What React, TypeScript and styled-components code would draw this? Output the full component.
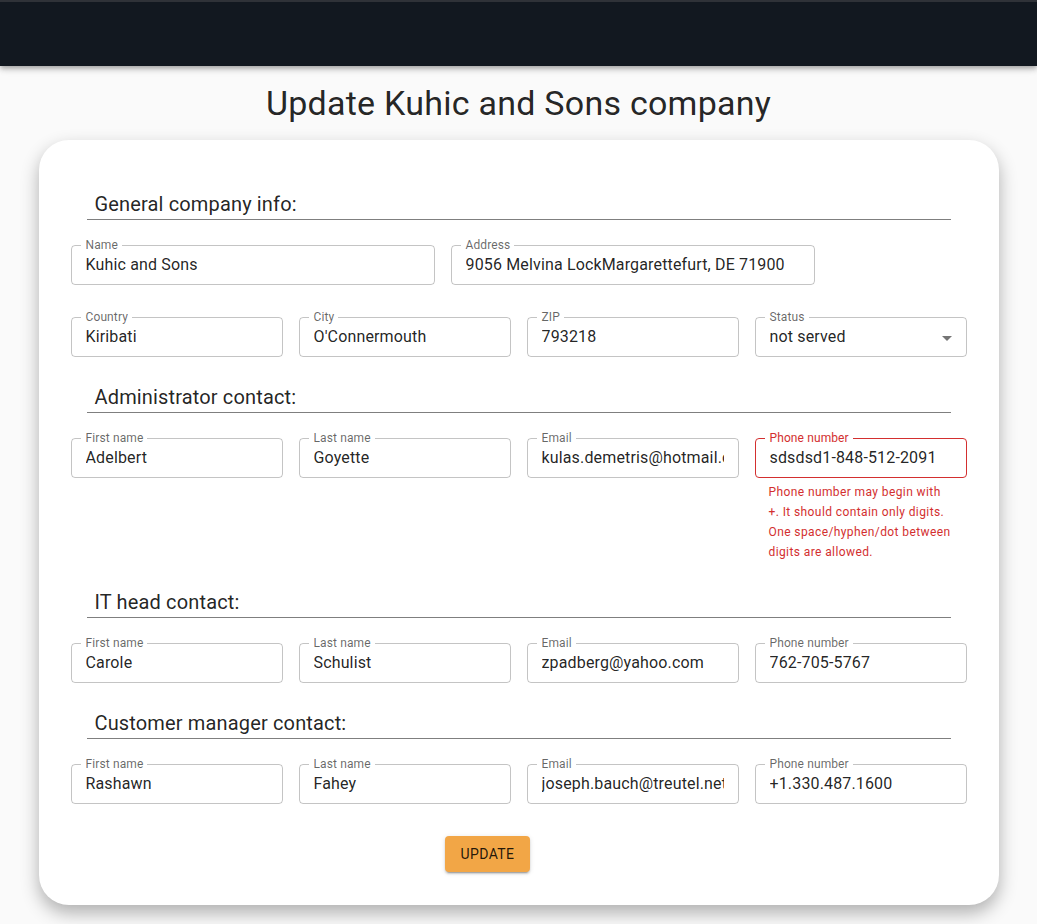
import React from "react";
import styled, { createGlobalStyle } from "styled-components";

const GlobalStyle = createGlobalStyle`
  body {
    margin: 0;
    background: #fafafa;
    font-family: Roboto, "Helvetica Neue", Arial, sans-serif;
    color: rgba(0, 0, 0, 0.87);
  }
  * { box-sizing: border-box; }
`;

const TopBar = styled.header`
  height: 66px;
  background: #121820;
  border-top: 2px solid #2f3238;
  box-shadow: 0 2px 4px -1px rgba(0,0,0,0.2), 0 4px 5px 0 rgba(0,0,0,0.14), 0 1px 10px 0 rgba(0,0,0,0.12);
`;

const Title = styled.h1`
  margin: 16px 0;
  font-size: 34px;
  font-weight: 400;
  line-height: 42px;
  letter-spacing: 0.00735em;
  text-align: center;
  color: rgba(0, 0, 0, 0.87);
`;

const Card = styled.main`
  width: 960px;
  margin: 0 auto 20px;
  background: #fff;
  border-radius: 30px;
  padding: 48px 32px 33px;
  box-shadow: 0 8px 18px rgba(0, 0, 0, 0.3);
`;

const Section = styled.section<{ $first?: boolean }>`
  margin-top: ${(p) => (p.$first ? "0" : "24px")};
`;

const SectionTitle = styled.h2`
  margin: 0 16px;
  padding: 1px 0 0 8px;
  font-size: 20px;
  font-weight: 400;
  line-height: 30px;
  letter-spacing: 0.0075em;
  color: rgba(0, 0, 0, 0.87);
  border-bottom: 1px solid rgba(0, 0, 0, 0.5);
`;

const FieldGrid = styled.div<{ $cols: string; $top?: number }>`
  display: grid;
  grid-template-columns: ${(p) => p.$cols};
  gap: 32px 16px;
  margin-top: ${(p) => p.$top ?? 25}px;
  align-items: start;
`;

const FieldWrap = styled.div`
  position: relative;
  min-width: 0;
`;

const FieldBox = styled.div<{ $error?: boolean }>`
  position: relative;
  height: 40px;
  border: 1px solid ${(p) => (p.$error ? "#d32f2f" : "rgba(0, 0, 0, 0.23)")};
  border-radius: 4px;
  display: flex;
  align-items: center;
`;

const FieldLabel = styled.label<{ $error?: boolean }>`
  position: absolute;
  top: -8px;
  left: 9px;
  padding: 0 4px 0 5px;
  background: #fff;
  font-size: 12px;
  line-height: 14px;
  letter-spacing: 0.00938em;
  color: ${(p) => (p.$error ? "#d32f2f" : "rgba(0, 0, 0, 0.6)")};
`;

const FieldInput = styled.input`
  width: 100%;
  height: 100%;
  border: none;
  outline: none;
  background: transparent;
  padding: 0 14px 2px;
  font-family: Roboto, "Helvetica Neue", Arial, sans-serif;
  font-size: 16px;
  letter-spacing: 0.00938em;
  color: rgba(0, 0, 0, 0.87);
`;

const SelectValue = styled.div`
  flex: 1;
  padding: 0 32px 2px 14px;
  font-size: 16px;
  letter-spacing: 0.00938em;
  color: rgba(0, 0, 0, 0.87);
  white-space: nowrap;
  overflow: hidden;
`;

const ArrowIcon = styled.svg`
  position: absolute;
  right: 7px;
  top: 8px;
  width: 24px;
  height: 24px;
  fill: rgba(0, 0, 0, 0.54);
`;

const HelperText = styled.p`
  margin: 4px 14px 0;
  font-size: 12px;
  line-height: 20px;
  letter-spacing: 0.03333em;
  color: #d32f2f;
`;

const ButtonRow = styled.div`
  display: flex;
  margin-top: 32px;
  padding-left: 374px;
`;

const UpdateButton = styled.button`
  height: 36px;
  padding: 6px 16px;
  border: none;
  border-radius: 4px;
  background: #f2a646;
  color: rgba(0, 0, 0, 0.87);
  font-family: Roboto, "Helvetica Neue", Arial, sans-serif;
  font-size: 14px;
  font-weight: 400;
  letter-spacing: 0.02857em;
  text-transform: uppercase;
  box-shadow: 0 3px 1px -2px rgba(0,0,0,0.2), 0 2px 2px 0 rgba(0,0,0,0.14), 0 1px 5px 0 rgba(0,0,0,0.12);
  cursor: pointer;
`;

type FieldProps = { label: string; value: string; error?: string; select?: boolean };

function Field({ label, value, error, select }: FieldProps) {
  return (
    <FieldWrap>
      <FieldBox $error={!!error}>
        {select ? (
          <>
            <SelectValue>{value}</SelectValue>
            <ArrowIcon viewBox="0 0 24 24">
              <path d="M7 10l5 5 5-5z" />
            </ArrowIcon>
          </>
        ) : (
          <FieldInput readOnly value={value} />
        )}
        <FieldLabel $error={!!error}>{label}</FieldLabel>
      </FieldBox>
      {error && <HelperText>{error}</HelperText>}
    </FieldWrap>
  );
}

const FOUR = "repeat(4, 1fr)";

type Contact = { first: string; last: string; email: string; phone: string; phoneError?: string };

function ContactSection({ title, c }: { title: string; c: Contact }) {
  return (
    <Section>
      <SectionTitle>{title}</SectionTitle>
      <FieldGrid $cols={FOUR}>
        <Field label="First name" value={c.first} />
        <Field label="Last name" value={c.last} />
        <Field label="Email" value={c.email} />
        <Field label="Phone number" value={c.phone} error={c.phoneError} />
      </FieldGrid>
    </Section>
  );
}

export default function App() {
  return (
    <>
      <GlobalStyle />
      <TopBar />
      <Title>Update Kuhic and Sons company</Title>
      <Card>
        <Section $first>
          <SectionTitle>General company info:</SectionTitle>
          <FieldGrid $cols="364px 364px">
            <Field label="Name" value="Kuhic and Sons" />
            <Field label="Address" value="9056 Melvina LockMargarettefurt, DE 71900" />
          </FieldGrid>
          <FieldGrid $cols={FOUR} $top={32}>
            <Field label="Country" value="Kiribati" />
            <Field label="City" value="O'Connermouth" />
            <Field label="ZIP" value="793218" />
            <Field label="Status" value="not served" select />
          </FieldGrid>
        </Section>
        <ContactSection
          title="Administrator contact:"
          c={{
            first: "Adelbert",
            last: "Goyette",
            email: "kulas.demetris@hotmail.com",
            phone: "sdsdsd1-848-512-2091",
            phoneError:
              "Phone number may begin with +. It should contain only digits. One space/hyphen/dot between digits are allowed.",
          }}
        />
        <ContactSection
          title="IT head contact:"
          c={{ first: "Carole", last: "Schulist", email: "zpadberg@yahoo.com", phone: "762-705-5767" }}
        />
        <ContactSection
          title="Customer manager contact:"
          c={{ first: "Rashawn", last: "Fahey", email: "joseph.bauch@treutel.net", phone: "+1.330.487.1600" }}
        />
        <ButtonRow>
          <UpdateButton>Update</UpdateButton>
        </ButtonRow>
      </Card>
    </>
  );
}
